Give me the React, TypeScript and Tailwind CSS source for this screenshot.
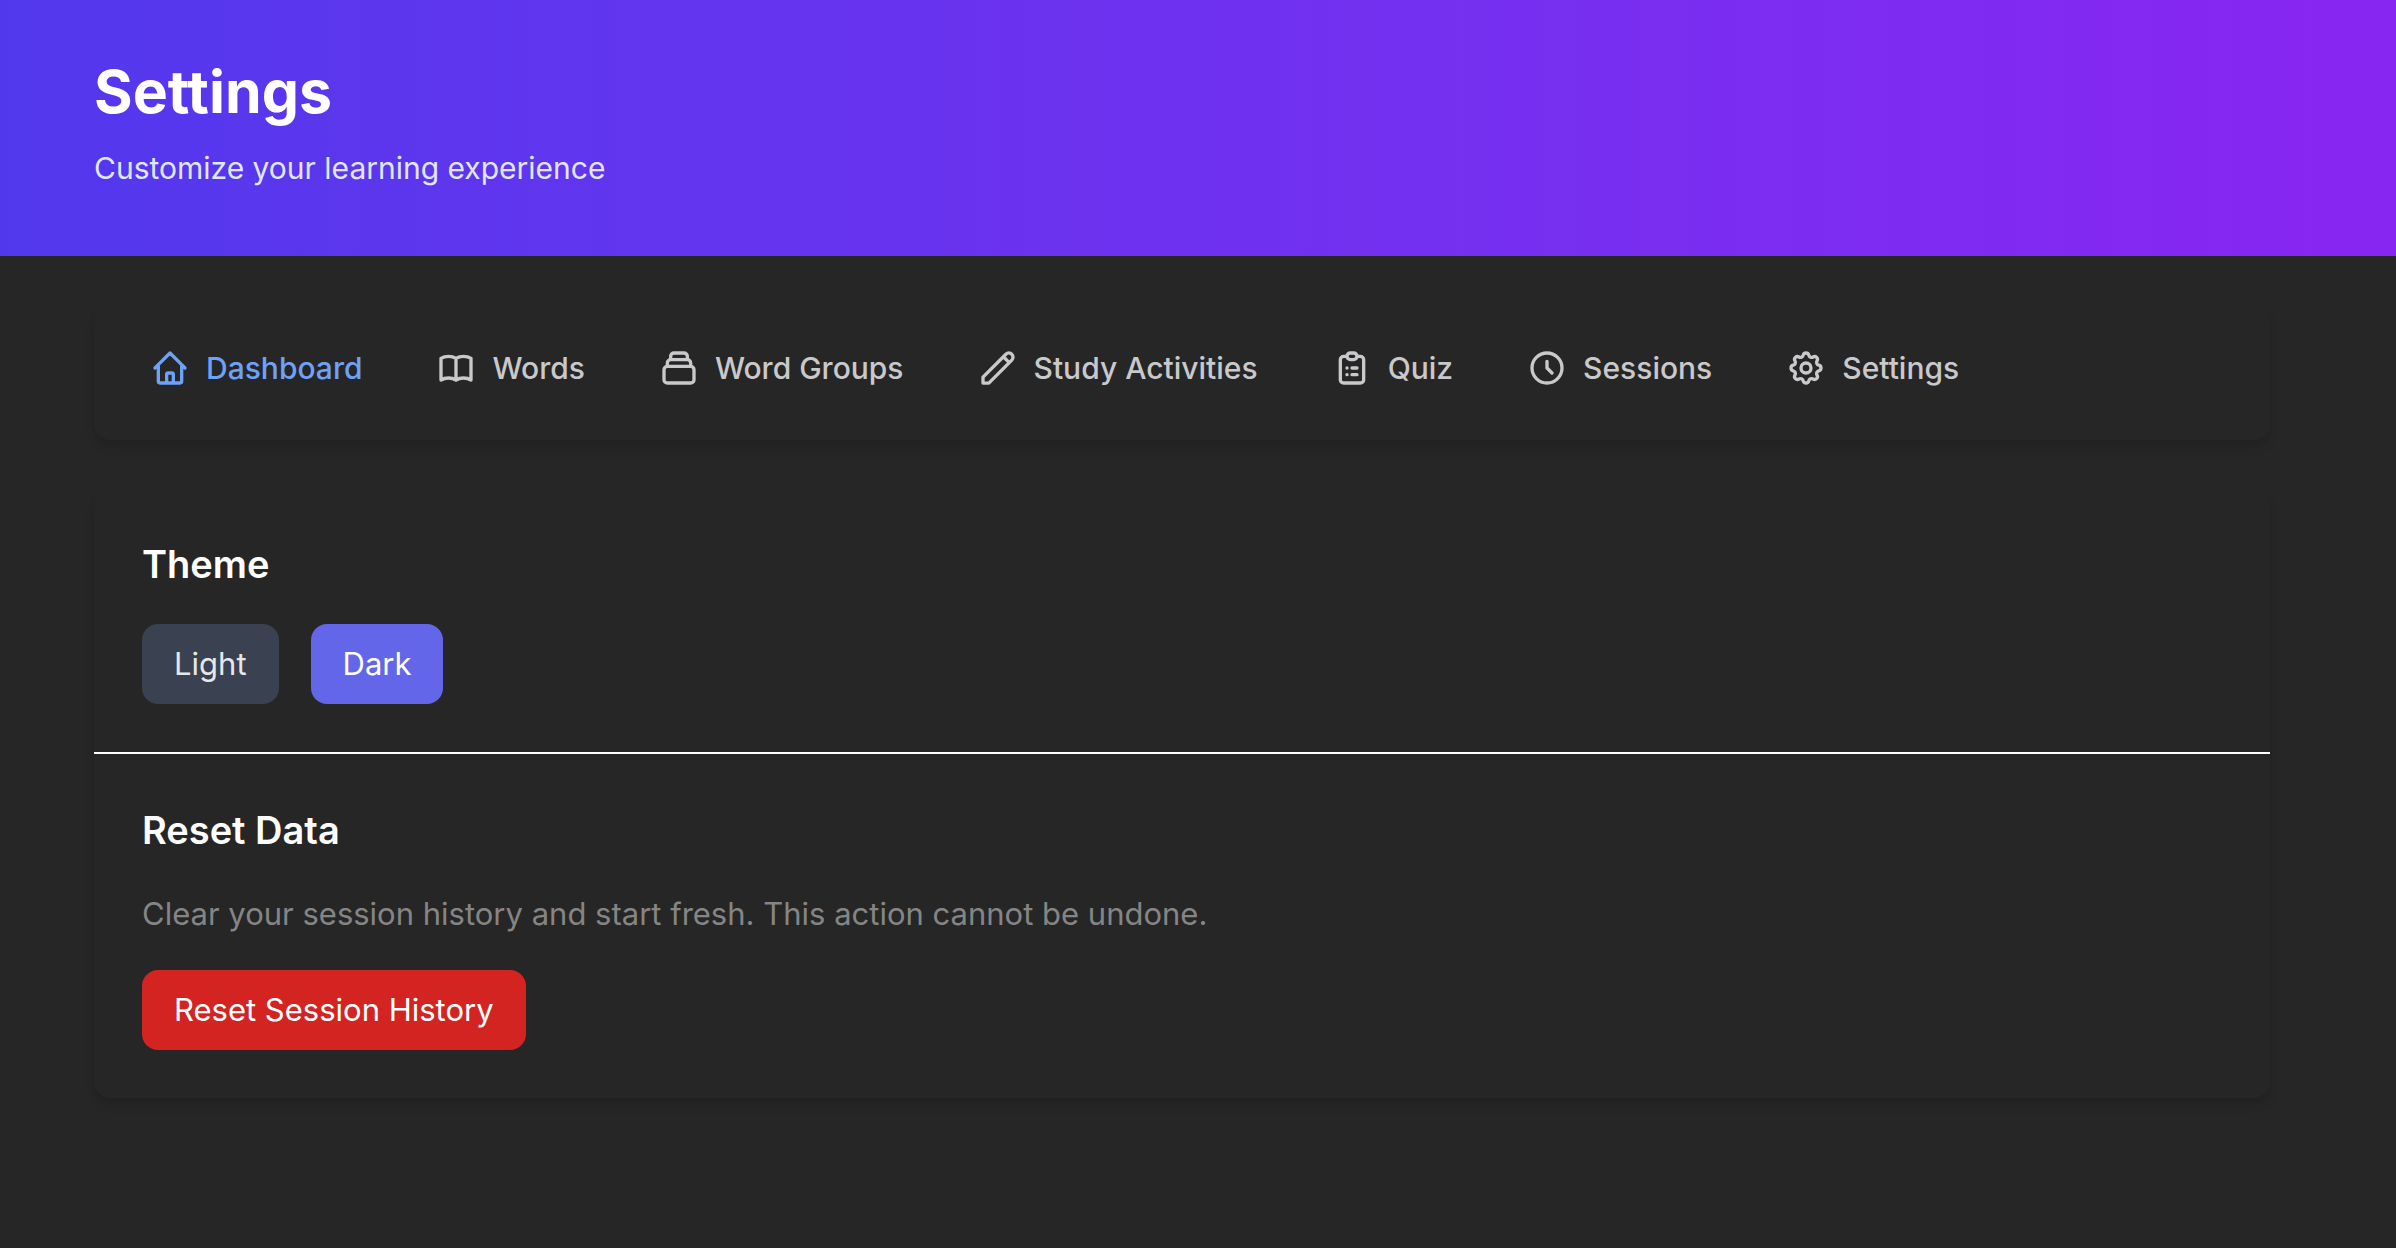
import type { IconType } from "react-icons";
import {
  HiOutlineBookOpen,
  HiOutlineClipboardList,
  HiOutlineClock,
  HiOutlineCog,
  HiOutlineCollection,
  HiOutlineHome,
  HiOutlinePencil,
} from "react-icons/hi";

const links: { label: string; icon: IconType; active?: boolean }[] = [
  { label: "Dashboard", icon: HiOutlineHome, active: true },
  { label: "Words", icon: HiOutlineBookOpen },
  { label: "Word Groups", icon: HiOutlineCollection },
  { label: "Study Activities", icon: HiOutlinePencil },
  { label: "Quiz", icon: HiOutlineClipboardList },
  { label: "Sessions", icon: HiOutlineClock },
  { label: "Settings", icon: HiOutlineCog },
];

const card = "rounded-2xl bg-[#262626] shadow-[0_8px_12px_-2px_rgba(0,0,0,0.1),0_4px_8px_-4px_rgba(0,0,0,0.1)]";

export default function App() {
  return (
    <div className="min-h-screen bg-[#262626] font-['Inter',sans-serif] text-[31px] leading-[48px]">
      <header className="bg-gradient-to-r from-[#5238ed] to-[#8825f1] pt-14 pr-[126px] pb-16 pl-[94px]">
        <h1 className="text-[59px] leading-[72px] font-bold text-white">Settings</h1>
        <p className="mt-4 text-[30px] leading-[48px] text-[#e0e7ff]">Customize your learning experience</p>
      </header>
      <main className="pt-12 pr-[126px] pb-12 pl-[94px]">
        <nav className={`${card} px-14 pt-10 pb-12`}>
          <ul className="flex gap-[74px] text-[30px] leading-[48px]">
            {links.map(({ label, icon: Icon, active }) => (
              <li key={label}>
                <a
                  href="#"
                  className={`flex items-center gap-4 font-medium ${active ? "text-[#6ea2f7]" : "text-[#c9c9cc]"}`}
                >
                  <Icon size={40} />
                  {label}
                </a>
              </li>
            ))}
          </ul>
        </nav>
        <div className={`${card} mt-12`}>
          <section className="border-b-2 border-white p-12">
            <h2 className="text-[38px] leading-[56px] font-semibold text-white">Theme</h2>
            <div className="mt-8 flex gap-8">
              <button type="button" className="rounded-2xl bg-[#3a4150] px-8 py-4 text-[#e5e7eb]">Light</button>
              <button type="button" className="rounded-2xl bg-[#6366e8] px-8 py-4 text-white">Dark</button>
            </div>
          </section>
          <section className="p-12">
            <h2 className="text-[38px] leading-[56px] font-semibold text-white">Reset Data</h2>
            <p className="mt-8 text-[#858585]">
              Clear your session history and start fresh. This action cannot be undone.
            </p>
            <button type="button" className="mt-8 rounded-2xl bg-[#d32422] px-8 py-4 text-white">
              Reset Session History
            </button>
          </section>
        </div>
      </main>
    </div>
  );
}
